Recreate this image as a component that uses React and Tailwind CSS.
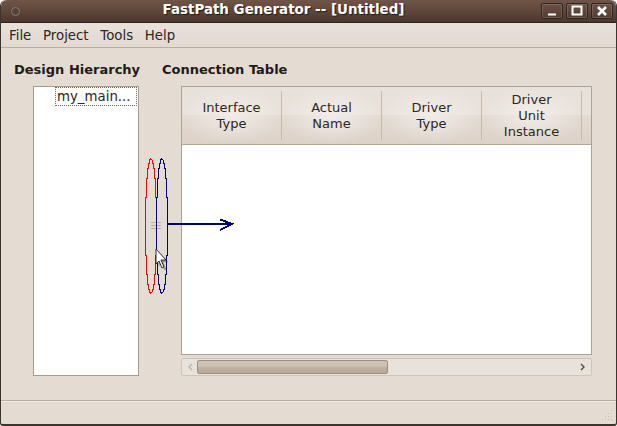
import React from 'react';

const columns = [
  ['Interface', 'Type'],
  ['Actual', 'Name'],
  ['Driver', 'Type'],
  ['Driver', 'Unit', 'Instance'],
];

const menus = ['File', 'Project', 'Tools', 'Help'];

const ELLIPSE = 'M10.5 4 L9 5 L9 8 L8 8 L8 13 L7 13 L7 23 L6 23 L6 42 L5 42 L5 100 L6 100 L6 119 L7 119 L7 129 L8 129 L8 134 L9 134 L9 137 L10.5 138 L12 137 L12 134 L13 134 L13 129 L14 129 L14 119 L15 119 L15 100 L16 100 L16 42 L15 42 L15 23 L14 23 L14 13 L13 13 L13 8 L12 8 L12 5 Z';

const WindowButton = ({ children }) => (
  <div className="w-[22px] h-[16px] rounded-[2px] border border-[#2e2620] bg-gradient-to-b from-[#6b5145] to-[#503c32] shadow-[inset_0_0_0_1px_rgba(255,255,255,0.14)] flex items-center justify-center">
    <svg width="14" height="12" viewBox="0 0 14 12" fill="none" stroke="#ffffff">
      {children}
    </svg>
  </div>
);

const TitleBar = () => (
  <div className="h-[23px] shrink-0 flex items-center rounded-t-[6px] border-b border-[#2b2420] bg-gradient-to-b from-[#6f5548] via-[#5f473b] to-[#4a372e] pl-[10px] pr-[3px]">
    <div className="w-[9px] h-[9px] rounded-full border border-[#8b7b72] bg-[#55423a]" />
    <div className="flex-1 text-center text-[13.45px] font-bold text-white leading-none pl-[6px] pb-[2px] [text-shadow:1px_1px_1px_#221a16]">
      FastPath Generator -- [Untitled]
    </div>
    <div className="flex gap-[3px]">
      <WindowButton><path d="M3 9.5h8" strokeWidth="2" /></WindowButton>
      <WindowButton><rect x="2.5" y="1.5" width="9" height="8" strokeWidth="2" /></WindowButton>
      <WindowButton><path d="M3 2l8 8M11 2l-8 8" strokeWidth="2.6" /></WindowButton>
    </div>
  </div>
);

const MenuBar = () => (
  <div className="h-[25px] shrink-0 flex items-center gap-[11.7px] pl-[8px] pt-[1px] border-b border-[#bcae9f] bg-gradient-to-b from-[#e9e2db] to-[#e2d9d0] text-[13.33px] text-[#2c2722]">
    {menus.map((m) => <span key={m}>{m}</span>)}
  </div>
);

const TableHeader = () => (
  <div className="h-[58px] shrink-0 flex border-b border-[#b5a797] bg-[linear-gradient(to_bottom,#e8e1da_0%,#e9e2db_48%,#e3dad1_50%,#dcd2c8_100%)]">
    {columns.map((lines, i) => (
      <div key={i} className="w-[100px] shrink-0 py-[4px] bg-[radial-gradient(ellipse_at_center,rgba(243,239,235,0.85),rgba(243,239,235,0)_72%)]">
        <div className="h-full border-r border-[#c6b9ab] flex flex-col items-center justify-center text-[13px] leading-[16px] text-[#2c2722]">
          {lines.map((l) => <span key={l}>{l}</span>)}
        </div>
      </div>
    ))}
  </div>
);

const ScrollBar = () => (
  <div className="h-[18px] mt-[3px] flex items-center justify-between rounded-[2px] border border-[#cfc4b8] bg-[#e9e2db] text-[#85786c]">
    <div className="flex items-center h-full">
      <svg width="15" height="16" viewBox="0 0 15 16" fill="none" stroke="#bdb2a6" strokeWidth="1.4">
        <path d="M10 5l-3 3 3 3" />
      </svg>
      <div className="w-[191px] h-[14px] rounded-[2px] border border-[#9c8e80] bg-[linear-gradient(to_bottom,#cfc3b7_0%,#cbbfb2_50%,#bdafa1_55%,#b9aa9c_100%)]" />
    </div>
    <svg width="15" height="16" viewBox="0 0 15 16" fill="none" stroke="#4f4841" strokeWidth="1.4" className="mr-[1px]">
      <path d="M6 5l3 3-3 3" />
    </svg>
  </div>
);

// the splitter overlay: two ellipses, the arrow and the mouse pointer
const SplitterOverlay = () => (
  <svg className="absolute left-[140px] top-[155px]" width="100" height="142" viewBox="0 0 100 142" fill="none" shapeRendering="crispEdges">
    <path d="M11 67h10M11 70h10M11 73h10" stroke="#b8a99a" />
    <path d={ELLIPSE} stroke="#ff0000" />
    <path d={ELLIPSE} stroke="#00007f" transform="translate(11 0)" />
    <path d="M27 69h64" stroke="#00007f" strokeWidth="2" />
    <path d="M80 64.5l12 4.5-12 6" stroke="#00007f" strokeWidth="2" />
    <path d="M17 95v15l3-3 3 7 2-1-3-7h5z" fill="#000000" opacity="0.3" transform="translate(1.5 1.5)" shapeRendering="auto" />
    <path d="M16 94v15l3-3 3 7 2-1-3-7h5z" fill="#ffffff" stroke="#1a1a1a" strokeWidth="0.9" shapeRendering="auto" />
  </svg>
);

const Grip = () => (
  <svg className="absolute right-[3px] bottom-[3px]" width="12" height="12" viewBox="0 0 12 12" fill="#cbbfb3">
    {[[10, 1], [7, 4], [10, 4], [4, 7], [7, 7], [10, 7], [1, 10], [4, 10], [7, 10], [10, 10]].map(([x, y]) => (
      <rect key={`${x}-${y}`} x={x} y={y} width="1" height="1" />
    ))}
  </svg>
);

export default function App() {
  return (
    <div className="w-[617px] h-[426px] bg-white" style={{ fontFamily: '"DejaVu Sans", sans-serif' }}>
      <div className="relative w-full h-full flex flex-col rounded-t-[6px] rounded-b-[3px] border-x border-b-2 border-[#3a3530] bg-[#e4dcd3] overflow-hidden">
        <TitleBar />
        <MenuBar />

        <div className="flex-1 flex pt-[14px] pl-[13px] pr-[24px] min-h-0">
          <div className="w-[148px] shrink-0 flex flex-col">
            <h2 className="text-[13px] leading-[16px] font-bold text-[#1e1a17]">Design Hierarchy</h2>
            <div className="mt-[8px] ml-[19px] w-[106px] h-[290px] border border-[#a89b8d] bg-white pl-[21px] pr-[1px]">
              <div className="h-[19px] border border-dotted border-[#6b625a] flex items-center pl-[1px] text-[13.33px] text-[#2c2722] whitespace-nowrap">
                my_main...
              </div>
            </div>
          </div>

          <div className="flex-1 flex flex-col min-w-0">
            <h2 className="text-[13px] leading-[16px] font-bold text-[#1e1a17]">Connection Table</h2>
            <div className="mt-[8px] ml-[19px] flex flex-col">
              <div className="h-[269px] border border-[#b0a292] bg-white flex flex-col">
                <TableHeader />
              </div>
              <ScrollBar />
            </div>
          </div>
        </div>

        <div className="h-[24px] shrink-0 border-t border-[#bcae9f] shadow-[inset_0_1px_0_#f0eae4]" />
        <Grip />
      </div>
      <SplitterOverlay />
    </div>
  );
}
